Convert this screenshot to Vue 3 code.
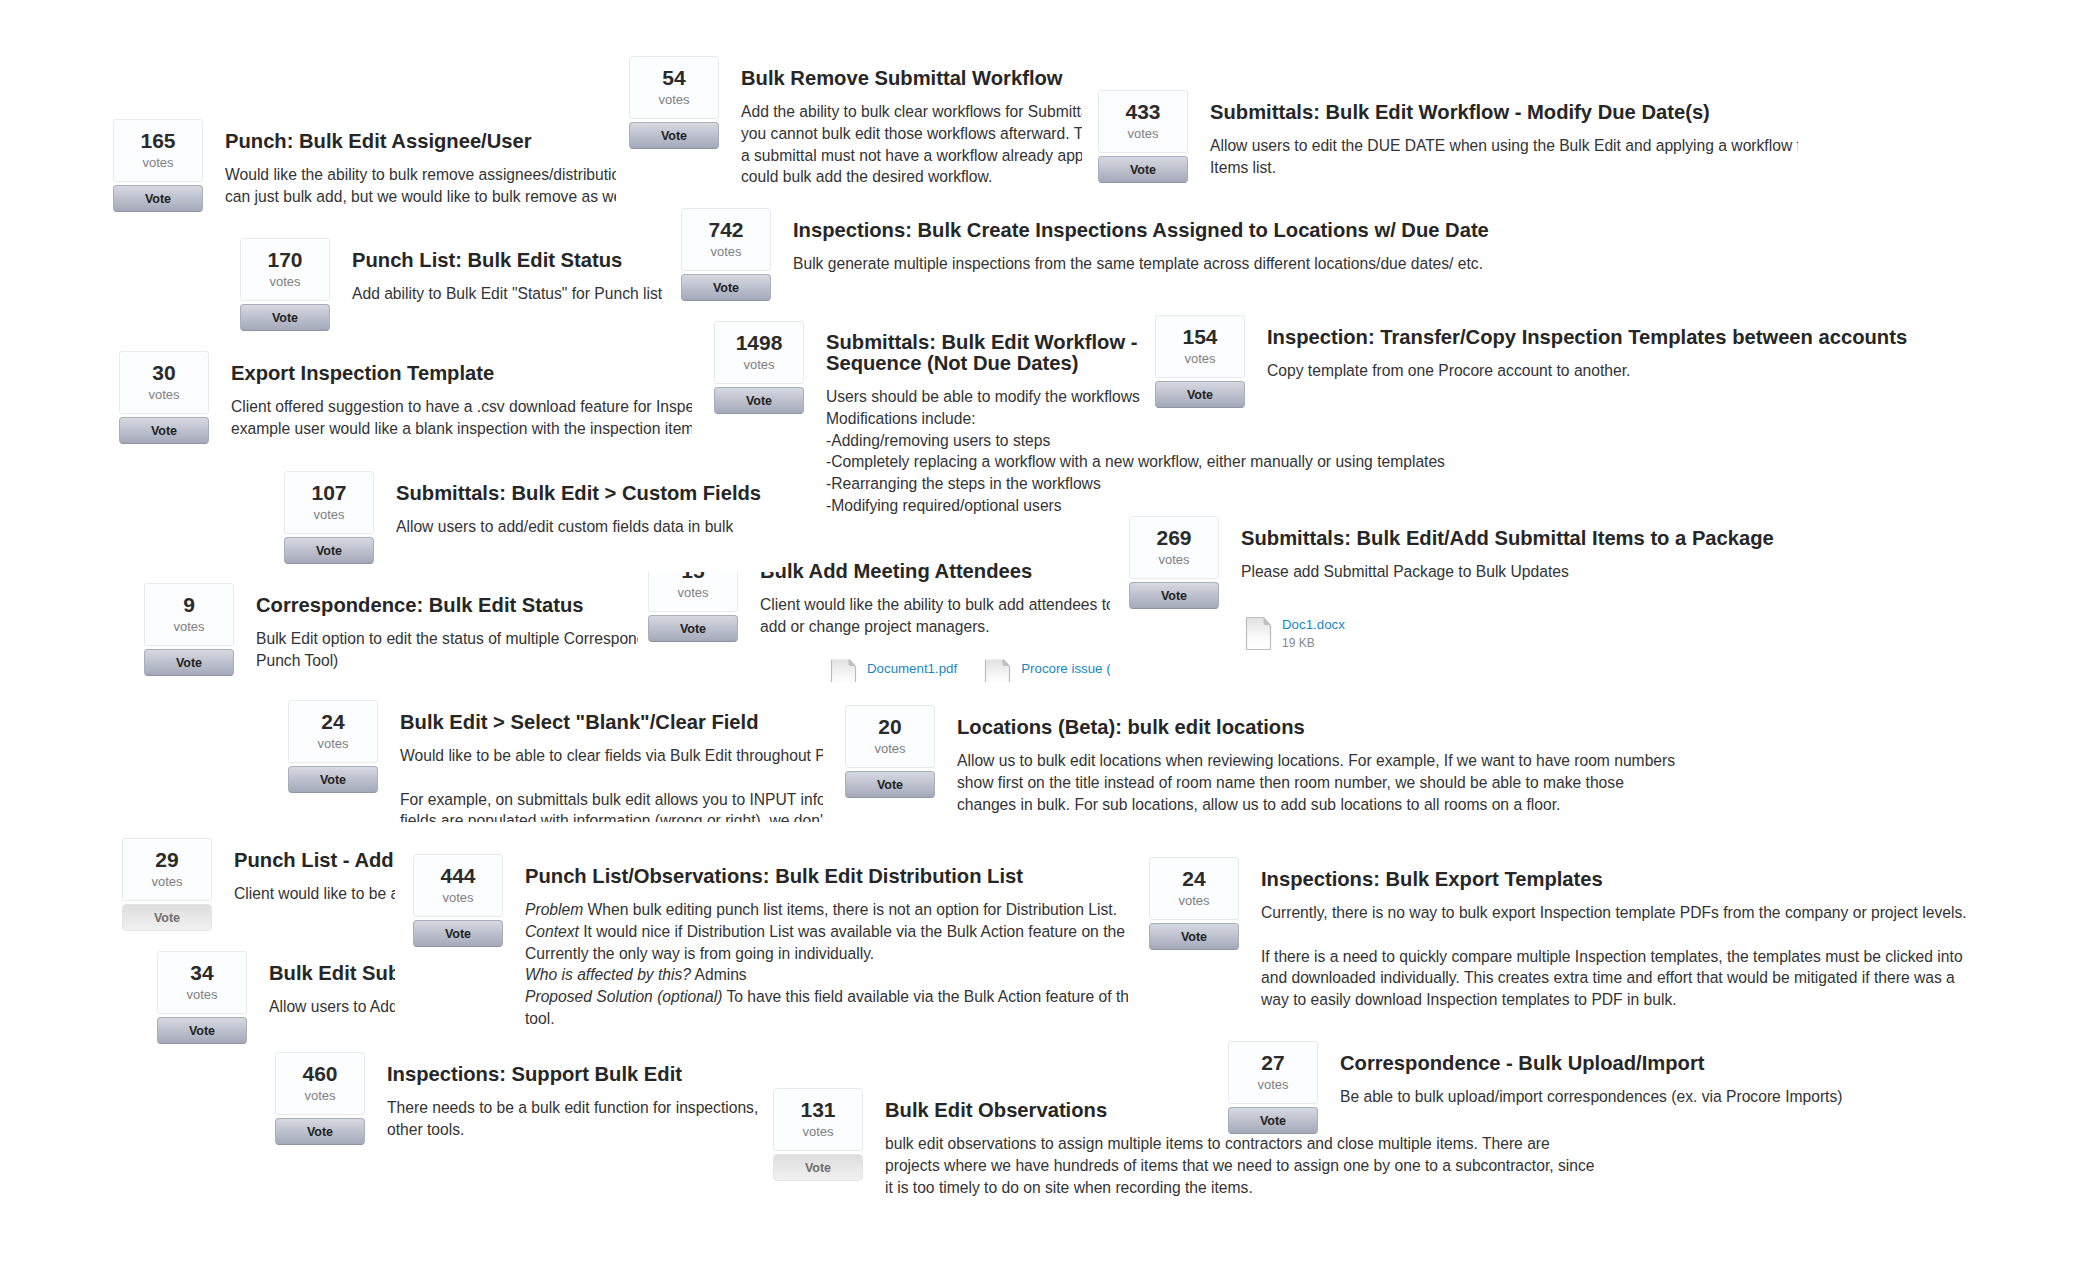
<script setup>
const cards = [
  { n: 165, x: 113, y: 119, w: 503, title: 'Punch: Bulk Edit Assignee/User', lines: ['Would like the ability to bulk remove assignees/distribution groups. Right now we', 'can just bulk add, but we would like to bulk remove as well.'] },
  { n: 54, x: 629, y: 56, w: 453, title: 'Bulk Remove Submittal Workflow', lines: ['Add the ability to bulk clear workflows for Submittals. Today', 'you cannot bulk edit those workflows afterward. To add one,', 'a submittal must not have a workflow already applied so we', 'could bulk add the desired workflow.'] },
  { n: 433, x: 1098, y: 90, w: 700, title: 'Submittals: Bulk Edit Workflow - Modify Due Date(s)', lines: ['Allow users to edit the DUE DATE when using the Bulk Edit and applying a workflow from the', 'Items list.'] },
  { n: 170, x: 240, y: 238, title: 'Punch List: Bulk Edit Status', lines: ['Add ability to Bulk Edit "Status" for Punch list'] },
  { n: 742, x: 681, y: 208, title: 'Inspections: Bulk Create Inspections Assigned to Locations w/ Due Date', lines: ['Bulk generate multiple inspections from the same template across different locations/due dates/ etc.'] },
  { n: 1498, x: 714, y: 321, title: ['Submittals: Bulk Edit Workflow -', 'Sequence (Not Due Dates)'], lines: ['Users should be able to modify the workflows', 'Modifications include:', '-Adding/removing users to steps', '-Completely replacing a workflow with a new workflow, either manually or using templates', '-Rearranging the steps in the workflows', '-Modifying required/optional users'] },
  { n: 154, x: 1155, y: 315, title: 'Inspection: Transfer/Copy Inspection Templates between accounts', lines: ['Copy template from one Procore account to another.'] },
  { n: 30, x: 119, y: 351, w: 573, title: 'Export Inspection Template', lines: ['Client offered suggestion to have a .csv download feature for Inspection templates. For', 'example user would like a blank inspection with the inspection items listed'] },
  { n: 15, x: 648, y: 549, w: 462, h: 133, title: 'Bulk Add Meeting Attendees', lines: ['Client would like the ability to bulk add attendees to meetings, and', 'add or change project managers.'], files: [{ name: 'Document1.pdf', size: '16 KB', indent: 70 }, { name: 'Procore issue (2).pdf', size: '46 KB', indent: 27 }], fileGap: 22, cut: true },
  { n: 107, x: 284, y: 471, w: 496, h: 101, title: 'Submittals: Bulk Edit > Custom Fields', lines: ['Allow users to add/edit custom fields data in bulk'] },
  { n: 269, x: 1129, y: 516, title: 'Submittals: Bulk Edit/Add Submittal Items to a Package', lines: ['Please add Submittal Package to Bulk Updates'], files: [{ name: 'Doc1.docx', size: '19 KB' }], fileGap: 33 },
  { n: 9, x: 144, y: 583, w: 494, title: 'Correspondence: Bulk Edit Status', lines: ['Bulk Edit option to edit the status of multiple Correspondence items (similar to', 'Punch Tool)'] },
  { n: 24, x: 288, y: 700, w: 535, h: 122, title: 'Bulk Edit > Select "Blank"/Clear Field', lines: ['Would like to be able to clear fields via Bulk Edit throughout Procore.', '', 'For example, on submittals bulk edit allows you to INPUT information but once the', 'fields are populated with information (wrong or right), we don\'t have'] },
  { n: 20, x: 845, y: 705, title: 'Locations (Beta): bulk edit locations', lines: ['Allow us to bulk edit locations when reviewing locations. For example, If we want to have room numbers', 'show first on the title instead of room name then room number, we should be able to make those', 'changes in bulk. For sub locations, allow us to add sub locations to all rooms on a floor.'] },
  { n: 29, x: 122, y: 838, w: 273, muted: true, title: 'Punch List - Add Custom Fields', lines: ['Client would like to be able to add custom fields to lists'] },
  { n: 444, x: 413, y: 854, w: 715, title: 'Punch List/Observations: Bulk Edit Distribution List', lines: [{ em: 'Problem', text: ' When bulk editing punch list items, there is not an option for Distribution List.' }, { em: 'Context', text: ' It would nice if Distribution List was available via the Bulk Action feature on the tool.' }, 'Currently the only way is from going in individually.', { em: 'Who is affected by this?', text: ' Admins' }, { em: 'Proposed Solution (optional)', text: ' To have this field available via the Bulk Action feature of the' }, 'tool.'] },
  { n: 24, x: 1149, y: 857, title: 'Inspections: Bulk Export Templates', lines: ['Currently, there is no way to bulk export Inspection template PDFs from the company or project levels.', '', 'If there is a need to quickly compare multiple Inspection templates, the templates must be clicked into', 'and downloaded individually. This creates extra time and effort that would be mitigated if there was a', 'way to easily download Inspection templates to PDF in bulk.'] },
  { n: 34, x: 157, y: 951, w: 238, title: 'Bulk Edit Submittal Fields', lines: ['Allow users to Add/Edit submittal fields in bulk'] },
  { n: 460, x: 275, y: 1052, w: 485, title: 'Inspections: Support Bulk Edit', lines: ['There needs to be a bulk edit function for inspections, similar to', 'other tools.'] },
  { n: 131, x: 773, y: 1088, muted: true, title: 'Bulk Edit Observations', lines: ['bulk edit observations to assign multiple items to contractors and close multiple items. There are', 'projects where we have hundreds of items that we need to assign one by one to a subcontractor, since', 'it is too timely to do on site when recording the items.'] },
  { n: 27, x: 1228, y: 1041, title: 'Correspondence - Bulk Upload/Import', lines: ['Be able to bulk upload/import correspondences (ex. via Procore Imports)'] },
]

function cardStyle(c) {
  const s = { left: c.x + 'px', top: c.y + 'px' }
  if (c.w) s.width = c.w + 'px'
  if (c.h) s.height = c.h + 'px'
  return s
}
</script>

<template>
  <main class="canvas">
    <article v-for="c in cards" :key="c.title" class="card" :style="cardStyle(c)">
      <div class="tally">
        <div class="count">
          <strong>{{ c.n }}</strong>
          <span>votes</span>
        </div>
        <button class="vote" :class="{ muted: c.muted }" type="button">Vote</button>
      </div>
      <div class="detail">
        <h2 v-if="Array.isArray(c.title)"><span v-for="t in c.title" :key="t" class="tline">{{ t }}</span></h2>
        <h2 v-else>{{ c.title }}</h2>
        <p v-for="(l, i) in c.lines" :key="i" class="line">
          <template v-if="typeof l === 'object'"><em>{{ l.em }}</em>{{ l.text }}</template>
          <template v-else>{{ l || '\u00a0' }}</template>
        </p>
        <div v-if="c.files" class="files" :style="{ marginTop: c.fileGap + 'px' }">
          <div v-for="f in c.files" :key="f.name" class="file" :class="{ cut: c.cut }" :style="{ marginLeft: (f.indent || 4) + 'px' }">
            <svg class="doc" width="27" height="35" viewBox="0 0 27 35">
              <defs>
                <linearGradient :id="'g' + f.size.replace(' ', '')" x1="0" y1="0" x2="0" y2="1">
                  <stop offset="0" stop-color="#e0e0e0" />
                  <stop offset="0.6" stop-color="#fafafa" />
                  <stop offset="1" stop-color="#ffffff" />
                </linearGradient>
              </defs>
              <path d="M1.5 2.5a1 1 0 0 1 1-1H18.5l7 8v23a1 1 0 0 1-1 1h-22a1 1 0 0 1-1-1z" :fill="'url(#g' + f.size.replace(' ', '') + ')'" stroke="#bdbdbd" stroke-width="1.2" />
              <path d="M18.5 1.5v5.5a2 2 0 0 0 2 2h5z" fill="#bfbfbf" />
            </svg>
            <div class="meta">
              <a>{{ f.name }}</a>
              <span>{{ f.size }}</span>
            </div>
          </div>
        </div>
      </div>
    </article>
  </main>
</template>

<style scoped>
.canvas {
  position: relative;
  width: 2081px;
  height: 1267px;
  overflow: hidden;
  background: #fff;
  font-family: "Liberation Sans", Arial, sans-serif;
  color: #333;
}
.card {
  position: absolute;
  display: flex;
  gap: 22px;
  overflow: hidden;
  background: #fff;
  white-space: nowrap;
}
.tally {
  flex: none;
  width: 90px;
  display: flex;
  flex-direction: column;
  gap: 3px;
}
.count {
  box-sizing: border-box;
  height: 63px;
  padding-top: 8px;
  border: 1px solid #e8eaee;
  border-radius: 3px;
  background: #fcfdfe;
  text-align: center;
}
.count strong {
  display: block;
  font-size: 21px;
  line-height: 26px;
  color: #2b2b2b;
}
.count span {
  display: block;
  font-size: 13px;
  line-height: 17px;
  color: #808080;
}
.vote {
  box-sizing: border-box;
  height: 27px;
  padding: 0;
  border: 1px solid #a9aebb;
  border-bottom-color: #8f94a4;
  border-radius: 4px;
  background: linear-gradient(#d6d9e1, #a4a9ba);
  font: bold 12.5px "Liberation Sans", Arial, sans-serif;
  color: #222;
}
.vote.muted {
  border-color: #e4e4e4;
  background: linear-gradient(#dedede, #f1f1f1);
  color: #6f6f6f;
}
.detail {
  padding-top: 11px;
}
h2 {
  margin: 0 0 12px;
  font-size: 20.2px;
  line-height: 22px;
  font-weight: 700;
  color: #262626;
}
.tline {
  display: block;
  line-height: 21px;
}
.line {
  margin: 0;
  font-size: 15.65px;
  line-height: 21.8px;
  color: #333;
}
.files {
  display: flex;
}
.file {
  display: flex;
  gap: 10px;
}
.file.cut .doc {
  margin-top: -3px;
  clip-path: inset(3px 0 0 0);
}
.meta a {
  display: block;
  font-size: 13.3px;
  line-height: 18px;
  color: #1a86bf;
}
.meta span {
  display: block;
  font-size: 12px;
  line-height: 18px;
  color: #888;
}
</style>
